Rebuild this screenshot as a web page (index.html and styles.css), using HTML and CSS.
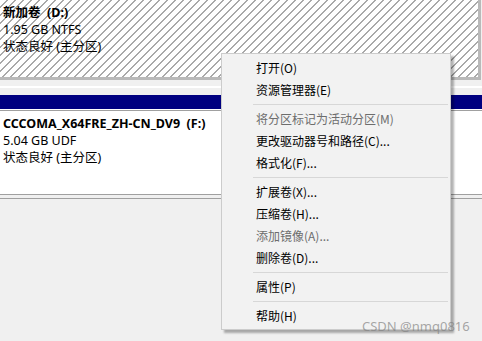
FILE: index.html
```html
<!DOCTYPE html>
<html lang="zh-CN">
<head>
  <meta charset="UTF-8" />
  <title>磁盘管理</title>
  <link rel="stylesheet" href="styles.css">
</head>
<body>
  <div class="disk-view">
    <div class="part part-selected">
      <div class="part-body hatched">
        <div class="part-name">新加卷  (D:)</div>
        <div>1.95 GB NTFS</div>
        <div>状态良好 (主分区)</div>
      </div>
    </div>

    <div class="disk-gap"></div>

    <div class="part part-cd">
      <div class="part-bar"></div>
      <div class="part-body">
        <div class="part-name">CCCOMA_X64FRE_ZH-CN_DV9  (F:)</div>
        <div>5.04 GB UDF</div>
        <div>状态良好 (主分区)</div>
      </div>
      <div class="part-foot"></div>
    </div>
  </div>

  <ul class="context-menu">
    <li>打开(O)</li>
    <li>资源管理器(E)</li>
    <li class="sep"></li>
    <li class="disabled">将分区标记为活动分区(M)</li>
    <li>更改驱动器号和路径(C)...</li>
    <li>格式化(F)...</li>
    <li class="sep"></li>
    <li>扩展卷(X)...</li>
    <li>压缩卷(H)...</li>
    <li class="disabled">添加镜像(A)...</li>
    <li>删除卷(D)...</li>
    <li class="sep"></li>
    <li>属性(P)</li>
    <li class="sep"></li>
    <li>帮助(H)</li>
  </ul>

  <div class="watermark">CSDN @nmq0816</div>
</body>
</html>
```

FILE: styles.css
```css
* { box-sizing: border-box; }
body {
  margin: 0;
  width: 482px;
  height: 341px;
  overflow: hidden;
  position: relative;
  background: #f0f0f0;
  color: #000;
  font-family: 'Noto Sans', 'Noto Sans CJK SC', sans-serif;
  font-size: 12px;
}

/* disk graphical view */
.disk-view { display: flex; flex-direction: column; }
.part-body {
  padding: 4px 3px 0;
  font-size: 12.5px;
  line-height: 17px;
}
.part-name { font-weight: bold; white-space: pre; }

.part-selected {
  height: 80px;
  margin-right: 1px;
  border-right: 3px solid #b9b9b9;
  border-bottom: 3px solid #b9b9b9;
}
.hatched {
  height: 100%;
  background: repeating-linear-gradient(135deg, #ffffff 0, #ffffff 4.6px, #a9a9a9 4.6px, #a9a9a9 5.66px);
}

.disk-gap {
  height: 15px;
  background: linear-gradient(#f0f0f0 0, #f0f0f0 6px, #ffffff 6px, #ffffff 8px, #f0f0f0 8px);
}

.part-cd { background: #fff; }
.part-bar {
  height: 15px;
  background: #000080;
  border-bottom: 1px solid #fff;
}
.part-cd .part-body {
  height: 81px;
  border-top: 1px solid #a0a0a0;
  padding-top: 4px;
}
.part-foot {
  height: 5px;
  background: #f0f0f0;
  border-top: 1px solid #a0a0a0;
  border-bottom: 1px solid #a0a0a0;
  margin-top: 3px;
}

/* context menu */
.context-menu {
  position: absolute;
  left: 221px;
  top: 53px;
  width: 230px;
  margin: 0;
  padding: 3px 2px 2px;
  list-style: none;
  background: #f2f2f2;
  border: 1px solid #cccccc;
  box-shadow: 3px 3px 2px rgba(0, 0, 0, 0.3);
  font-family: 'Noto Sans CJK SC', 'Noto Sans', sans-serif;
}
.context-menu li {
  height: 22px;
  line-height: 22px;
  padding-left: 32px;
}
.context-menu li.disabled { color: #6d6d6d; }
.context-menu li.sep {
  height: 7px;
  margin-left: 29px;
  padding: 0;
  background: linear-gradient(transparent 3px, #d7d7d7 3px, #d7d7d7 4px, transparent 4px);
}

.watermark {
  position: absolute;
  left: 362px;
  top: 317px;
  font-family: 'Noto Sans', sans-serif;
  font-size: 13px;
  color: rgba(130, 130, 130, 0.7);
}
```
